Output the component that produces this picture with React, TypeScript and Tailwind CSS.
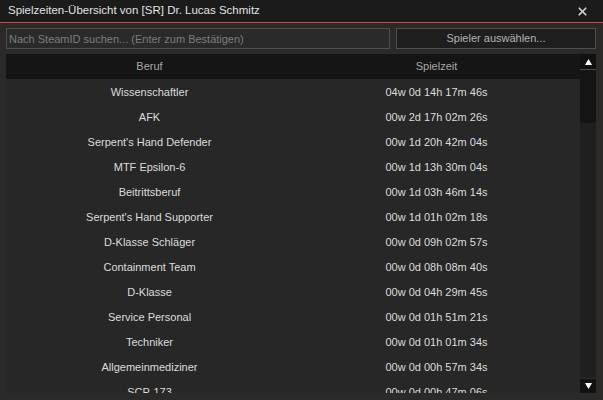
import { X } from "lucide-react";

type Entry = { job: string; time: string };

const entries: Entry[] = [
  { job: "Wissenschaftler", time: "04w 0d 14h 17m 46s" },
  { job: "AFK", time: "00w 2d 17h 02m 26s" },
  { job: "Serpent's Hand Defender", time: "00w 1d 20h 42m 04s" },
  { job: "MTF Epsilon-6", time: "00w 1d 13h 30m 04s" },
  { job: "Beitrittsberuf", time: "00w 1d 03h 46m 14s" },
  { job: "Serpent's Hand Supporter", time: "00w 1d 01h 02m 18s" },
  { job: "D-Klasse Schläger", time: "00w 0d 09h 02m 57s" },
  { job: "Containment Team", time: "00w 0d 08h 08m 40s" },
  { job: "D-Klasse", time: "00w 0d 04h 29m 45s" },
  { job: "Service Personal", time: "00w 0d 01h 51m 21s" },
  { job: "Techniker", time: "00w 0d 01h 01m 34s" },
  { job: "Allgemeinmediziner", time: "00w 0d 00h 57m 34s" },
  { job: "SCP-173", time: "00w 0d 00h 47m 06s" },
];

function Arrow({ up }: { up?: boolean }) {
  return (
    <svg width="7" height="6" viewBox="0 0 7 6" className="fill-white">
      {up ? <polygon points="3.5,0 7,6 0,6" /> : <polygon points="0,0 7,0 3.5,6" />}
    </svg>
  );
}

export default function App() {
  return (
    <div className="w-[603px] h-[400px] overflow-hidden bg-[#2c2a28] flex flex-col font-['Liberation_Sans',Arial,sans-serif] text-[11px]">
      <div className="h-[22px] bg-[#1b1b1b] flex items-center justify-between pl-2 pr-[14px]">
        <span className="text-[11.5px] text-[#e2e2e2]">Spielzeiten-Übersicht von [SR] Dr. Lucas Schmitz</span>
        <X className="w-[13px] h-[13px] text-[#cfcfcf]" strokeWidth={3.2} />
      </div>
      <div className="h-px bg-[#d8443c]" />

      <div className="flex gap-[6px] pl-[6px] pt-[5px]">
        <input
          type="text"
          placeholder="Nach SteamID suchen... (Enter zum Bestätigen)"
          className="w-[384px] h-[21px] px-[2px] bg-[#2a2a2a] border border-[#4f4f4f] text-[#bbb] placeholder:text-[#7c7c7c] outline-none"
        />
        <button className="w-[200px] h-[21px] bg-[#1e1e1e] border border-[#4f4f4f] text-[#b4b4b4]">
          Spieler auswählen...
        </button>
      </div>

      <div className="mt-[5px] ml-[6px] w-[590px] h-[339px] flex overflow-hidden">
        <div className="flex-1 flex flex-col bg-[#272727]">
          <div className="h-[25px] shrink-0 bg-[#151515] grid grid-cols-2 items-center text-center text-[#a8a8a8]">
            <span>Beruf</span>
            <span>Spielzeit</span>
          </div>
          {entries.map((e) => (
            <div key={e.job} className="h-[25px] shrink-0 pt-[2px] grid grid-cols-2 items-center text-center text-[#dcdcdc]">
              <span>{e.job}</span>
              <span>{e.time}</span>
            </div>
          ))}
        </div>

        <div className="w-[16px] flex flex-col bg-[#1f1f1f]">
          <div className="h-[16px] bg-[#111] border-b border-[#4a4a4a] flex items-center justify-center">
            <Arrow up />
          </div>
          <div className="h-[53px] bg-[#141414]" />
          <div className="flex-1" />
          <div className="h-[15px] bg-[#111] border-t border-[#2e2e2e] flex items-center justify-center">
            <Arrow />
          </div>
        </div>
      </div>
    </div>
  );
}
